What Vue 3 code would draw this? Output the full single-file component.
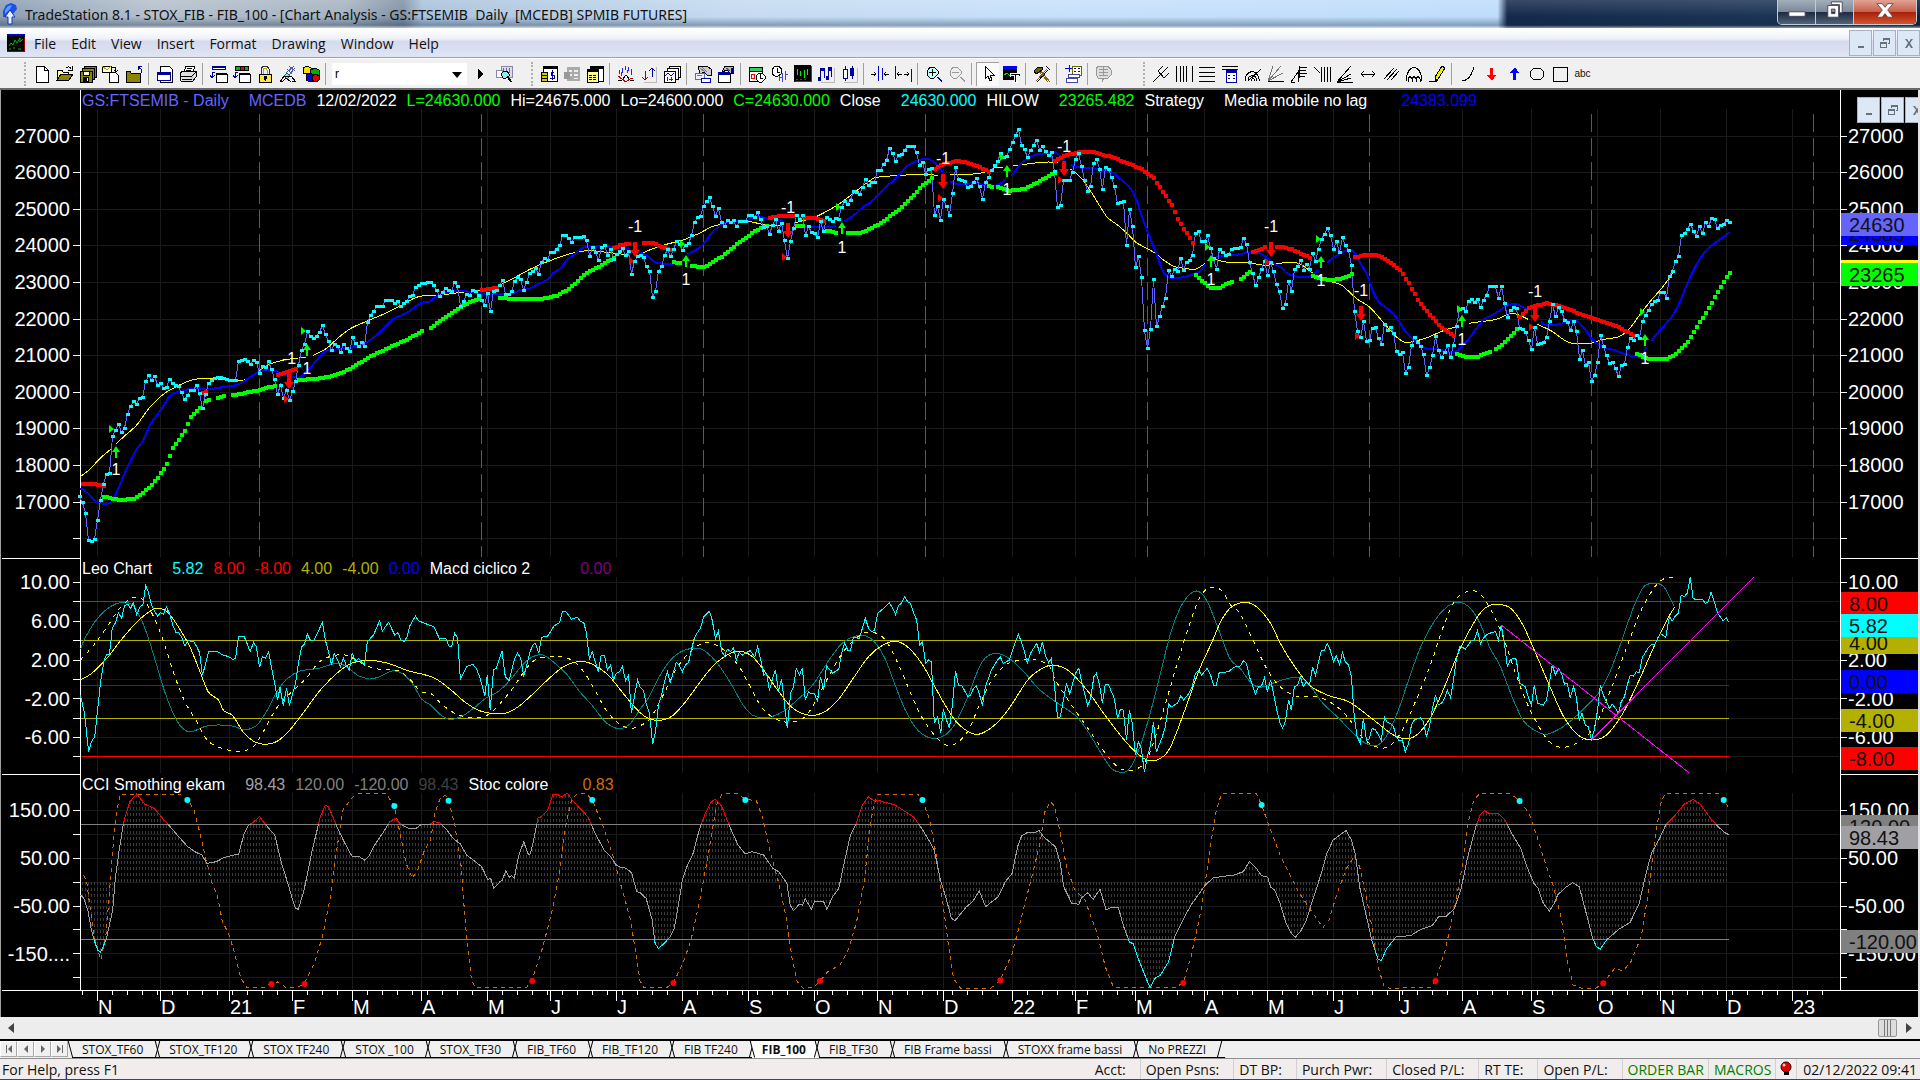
<template>
  <div class="window">
    <header class="title-bar">
      <svg class="app-logo" viewBox="0 0 18 24" aria-hidden="true">
        <path d="M2 15V9l3-6 5-2 5 2 1 4-4 5v3H9V9L6 13v2z" fill="#1c50e8" />
        <path d="M4 12V8l3-4 4-1-2 4z" fill="#5a9cff" />
        <path d="M9 8l5 7h-3v7H7v-7H4z" fill="#e8f2ff" stroke="#1238b4" />
      </svg>
      <h1 class="title">TradeStation 8.1 - STOX_FIB - FIB_100 - [Chart Analysis - GS:FTSEMIB&nbsp; Daily&nbsp; [MCEDB] SPMIB FUTURES]</h1>
      <div class="window-buttons">
        <button class="win-btn" type="button" aria-label="Minimize">
          <svg viewBox="0 0 20 20"><path d="M1 12h18v5H1z" fill="#fff" stroke="#445" /></svg>
        </button>
        <button class="win-btn" type="button" aria-label="Restore">
          <svg viewBox="0 0 20 20">
            <path d="M6 1h12v12h-3V4H6z" fill="#fff" stroke="#445" />
            <path d="M2 5h12v13H2zM6 9v5h4V9z" fill="#fff" fill-rule="evenodd" stroke="#445" />
          </svg>
        </button>
        <button class="win-btn close" type="button" aria-label="Close">
          <svg viewBox="0 0 20 20"><path d="M1 3h6l3 4 3-4h6l-6 7 6 8h-6l-3-4-3 4H1l6-8z" fill="#fff" stroke="#644" /></svg>
        </button>
      </div>
    </header>

    <nav class="menu-bar">
      <svg class="doc-icon" viewBox="0 0 18 18" aria-hidden="true">
        <path d="M0 0h18v18H0z" />
        <path d="M0 0h18v2H0z" fill="#0000d0" />
        <path d="M2 12l2-3 2 2 2-5 2 3 3-5v4l3-3M2 15h2M6 14h2M11 15h3" fill="none" stroke="#0b0" />
        <path d="M17.500 3v15M0 17.500h18" stroke="#900" />
      </svg>
      <button v-for="item in menu" :key="item" class="menu-item" type="button">{{ item }}</button>
      <div class="mdi-buttons">
        <button v-for="b in mdi" :key="b.name" type="button" :aria-label="b.name + ' chart'">
          <svg viewBox="0 0 12 12"><path :d="b.d" /></svg>
        </button>
      </div>
    </nav>

    <div class="toolbar">
      <template v-for="(tool, i) in tools" :key="i">
        <span v-if="tool === '|'" class="sep"></span>
        <span v-else-if="tool === ':'" class="grip"></span>
        <span v-else-if="tool === ' '" class="spacer"></span>
        <span v-else-if="tool === '.'" class="spacer small"></span>
        <div v-else-if="tool === 'symbol'" class="symbol-box">
          <input v-model="symbol" type="text" aria-label="Symbol" />
          <svg viewBox="0 0 10 6"><path d="M0 0h10L5 6z" /></svg>
        </div>
        <button v-else class="tool" :class="{ pressed: tool === 'pointer' }" type="button" :aria-label="tool">
          <span v-if="tool === 'abc'" class="abc">abc</span>
          <svg v-else viewBox="0 0 18 18">
            <path
              v-for="(s, j) in icons[tool]"
              :key="j"
              :d="s[0]"
              :fill="s[1] || 'none'"
              :stroke="s[2] || 'none'"
            />
          </svg>
        </button>
      </template>
    </div>

    <main class="chart">
      <div class="mdi-buttons floating">
        <button v-for="b in mdi" :key="b.name" type="button" :aria-label="b.name + ' window'">
          <svg viewBox="0 0 12 12"><path :d="b.d" /></svg>
        </button>
      </div>

      <section v-for="pane in panes" :key="pane.id" class="pane">
        <div class="legend">
          <span v-for="(l, i) in pane.legend" :key="i" :class="[l[1], l[2]]">{{ l[0] }}</span>
        </div>
        <svg class="plot" :viewBox="`0 ${pane.top} 1920 ${pane.height}`" role="img" :aria-label="pane.legend[0][0]">
          <!-- grid and axes -->
          <path class="grid" :d="pane.grid" />
          <path class="axis" :d="pane.axis" />
          <text v-for="t in pane.labels" :key="'l' + t.text" class="tick-label end" x="70" :y="t.y + 7">{{ t.left || t.text }}</text>
          <text v-for="t in pane.labels" :key="'r' + t.text" class="tick-label" x="1848" :y="t.y + 7">{{ t.text }}</text>
          <g v-for="(t, i) in pane.tags" :key="'t' + i">
            <rect x="1841" :y="t.y" width="77" :height="t.h" :fill="t.fill" />
            <text class="tag-label" x="1849" :y="t.y + t.base">{{ t.text }}</text>
          </g>

          <template v-if="pane.id === 'price'">
            <path class="cycle" :d="cycleLines" />
            <path class="line yellow" :d="curve(slowAvg)" />
            <path class="line blue thick" :d="curve(fastAvg)" />
            <path class="line violet" :d="straight(close)" />
            <path class="fill green" :d="squares(hilowUp, 4, 4)" />
            <path class="fill red" :d="squares(hilowDown, 4, 4)" />
            <path class="fill cyan" :d="squares(close, 4, 3)" />
            <g v-for="s in signals" :key="s.x">
              <path class="fill" :class="s.buy ? 'green' : 'red'" :d="arrow(s)" />
              <path class="fill" :class="s.buy ? 'green' : 'red'" :d="`M${s.fx - 2} ${s.fy - 4}v8l5-4z`" />
              <text class="signal-label" :x="s.x" :y="s.ty + 6">{{ s.buy ? '1' : '-1' }}</text>
            </g>
          </template>

          <template v-else-if="pane.id === 'leo'">
            <path class="line red" :d="level(155) + level(620)" />
            <path class="line olive" :d="level(271) + level(505)" />
            <path class="line navy" stroke-dasharray="6 2" :d="level(388)" />
            <path class="line purple" :d="level(406)" />
            <path class="line teal" :d="curve(cycleFast)" />
            <path class="line yellow" stroke-dasharray="4 5" :d="curve(cycleMid)" />
            <path class="line yellow" :d="curve(cycleSlow)" />
            <path class="line cyan" :d="straight(leo)" />
            <path class="line magenta" :d="straight(trend)" />
          </template>

          <template v-else>
            <defs>
              <clipPath id="over"><rect x="81" y="780" width="1760" height="44" /></clipPath>
              <clipPath id="under"><rect x="81" y="939" width="1760" height="60" /></clipPath>
            </defs>
            <path class="hatch" :d="hatch" />
            <path class="line gray" :d="level(823) + level(1168)" />
            <path class="line orange" stroke-dasharray="4 4" :d="straight(stoc)" />
            <path class="line silver" :d="straight(cci)" />
            <path class="line red" clip-path="url(#over)" :d="straight(cci)" />
            <path class="line cyan" clip-path="url(#under)" :d="straight(cci)" />
            <circle v-for="(p, i) in stocTops" :key="'c' + i" class="fill cyan" :cx="p[0]" :cy="p[1]" r="3" />
            <circle v-for="(p, i) in stocLows" :key="'d' + i" class="fill red" :cx="p[0]" :cy="p[1]" r="3" />
            <path class="axis" :d="timeTicks" />
            <text v-for="m in months" :key="m.x" class="tick-label" :x="m.x + 1" y="1014">{{ m.text }}</text>
          </template>
        </svg>
      </section>
    </main>

    <div class="scroll-bar">
      <button type="button" aria-label="Scroll left"><svg viewBox="0 0 6 10"><path d="M6 0v10L0 5z" /></svg></button>
      <span class="thumb"></span>
      <button type="button" aria-label="Scroll right"><svg viewBox="0 0 6 10"><path d="M0 0v10l6-5z" /></svg></button>
    </div>

    <div class="tabs">
      <button v-for="n in pager" :key="n.name" class="pager" type="button" :aria-label="n.name">
        <svg viewBox="0 0 8 10"><path :d="n.d" /></svg>
      </button>
      <div class="tab-list" role="tablist">
        <button
          v-for="t in tabs"
          :key="t"
          class="tab"
          :class="{ active: t === activeTab }"
          type="button"
          role="tab"
          :aria-selected="t === activeTab"
          @click="activeTab = t"
        >{{ t }}</button>
      </div>
    </div>

    <footer class="status-bar">
      <span class="help">For Help, press F1</span>
      <span v-for="s in status" :key="s" class="cell">{{ s }}</span>
      <span class="cell on">ORDER BAR</span>
      <span class="cell on">MACROS</span>
      <span class="cell bulb">
        <svg viewBox="0 0 12 14"><circle cx="6" cy="6" r="5" fill="#e00000" stroke="#300" /><path d="M4 11h5v3H4z" /><circle cx="4" cy="4" r="1.500" fill="#fcc" /></svg>
      </span>
      <span class="cell date">02/12/2022 09:41</span>
    </footer>
  </div>
</template>

<script setup>
import { ref } from 'vue'

const symbol = ref('r')
const activeTab = ref('FIB_100')

const menu = ['File', 'Edit', 'View', 'Insert', 'Format', 'Drawing', 'Window', 'Help']
const tabs = [
  'STOX_TF60', 'STOX_TF120', 'STOX TF240', 'STOX _100', 'STOX_TF30', 'FIB_TF60', 'FIB_TF120',
  'FIB TF240', 'FIB_100', 'FIB_TF30', 'FIB Frame bassi', 'STOXX frame bassi', 'No PREZZI'
]
const status = ['Acct:', 'Open Psns:', 'DT BP:', 'Purch Pwr:', 'Closed P/L:', 'RT TE:', 'Open P/L:']
const pager = [
  { name: 'First', d: 'M1 1h1v8H1zM7 1v8L3 5z' },
  { name: 'Previous', d: 'M6 1v8L2 5z' },
  { name: 'Next', d: 'M2 1v8l4-4z' },
  { name: 'Last', d: 'M1 1v8l4-4zM6 1h1v8H6z' }
]
const mdi = [
  { name: 'Minimize', d: 'M3 9h6v2H3z' },
  { name: 'Restore', d: 'M4 1h7v6H9V6h1V3H5v1H4zM1 5h7v6H1zM2 7v3h5V7z' },
  { name: 'Close', d: 'M2 2h2l2 3 2-3h2L7 6l3 5H8L6 8l-2 3H2l3-5z' }
]

// toolbar: '|' separator, ':' grip, ' ' and '.' free space
const tools = [
  ':', 'new', 'open', 'save', 'import', 'folder', '|', 'page', 'print', '|', 'stack', 'stack2', 'lock', 'satellite',
  'cubes', '|', 'symbol', 'go', 'lookup', '.', ':', 'money', 'table-off', 'table', '|', 'wave', 'updown', 'charts', '|',
  'edit', 'format', '|', 'calendar', 'clock', 'bars', 'notes', 'candles', '|', 'squeeze', 'expand', '|', 'zoom-in',
  'zoom-out', '|', 'pointer', 'text-chart', '|', 'hammer', '|', 'macro', '|', 'bubble', ' ', ':', 'pitchfork', 'vlines',
  'hlines', 'calc', 'arc', 'fan', 'retrace', 'timezone', 'speed', 'hextend', 'parallel', 'cycle', 'pencil', '|',
  'curve', 'down', 'up', 'ellipse', 'rect', 'abc'
]

const K = '#000'
const B = '#0000a0'
const icons = {
  new: [['M3 1h8l4 4v12H3z', '#fff', K], ['M11 1v4h4', '', K]],
  open: [['M1 15V5h5l1 2h5v3', '#ff9', K], ['M1 15l4-6h12l-4 6z', '#8a8400', K], ['M10 3c2-2 4-1 5 1m1-3v4h-4', '', K]],
  save: [['M5 1h12v11H5z', '#8a8400', K], ['M3 3h12v11H3z', '#8a8400', K], ['M1 6h12v11H1z', '#8a8400', K], ['M4 6h6v4H4z', '#fff', K], ['M4 12h6v5H4z', K], ['M8 13h1v3H8z', '#fff']],
  import: [['M0 1h9v6H0z', '#ffd', K], ['M0 1l5 4 4-4', '', '#aa0'], ['M7 7h6l3 3v7H7z', '#fff', K], ['M10 2c4 0 4 1 4 5m-2-2l2 2 2-2', '', K]],
  folder: [['M1 6h4l1 2h9v9H1z', '#8a8400', K], ['M16 8V4l-3-2m0 3V1h4', '', B]],
  page: [['M4 1h9l3 3v13H4z', '#fff', K], ['M1 7h13v8H1z', '#fff', B], ['M1 7h13v3H1z', B]],
  print: [['M5 7l2-6h9l-2 6z', '#fff', K], ['M1 8l3-2h13v6l-3 4H2l-1-3z', '#ddd', K], ['M1 11h12l4-4M3 14h10M8 3h5M7 5h5', '', K], ['M12 12h2v1h-2z', '#cc0']],
  stack: [['M2 1h14v4H2z', B], ['M3 3h12', '', '#fff'], ['M6 9h11v8H6z', '#fff', K], ['M6 8h11v2H6z', K], ['M5 7H2v5m-2-2l2 3 3-3', '', B]],
  stack2: [['M2 1h14v5H2z', K], ['M3 2h4v3H3z', '#0b0'], ['M8 2h3v3H8z', '#e00'], ['M12 2h3v3h-3z', '#0b0'], ['M6 9h11v8H6z', '#fff', K], ['M6 8h11v2H6z', K], ['M5 7H2v5m-2-2l2 3 3-3', '', B]],
  lock: [['M5 9V4l2-3h4l2 3v5', '', '#333'], ['M7 9V5l1-2h2l1 2v4', '', '#aa0'], ['M3 9h12v8H3z', '#ffe640', K], ['M8 11h3v2l-1 3H9l-1-3z', K]],
  satellite: [['M7 8l8-7m-5 9l6-7M10 1l6 5M8 4l5 5', '', '#55a'], ['M5 11l3-3 3 3-3 3z', '#6ff', '#066'], ['M1 17l4-6h7l5 6M3 17l4-4 5 4M1 16h3m9 0h3', '', K]],
  cubes: [['M1 3l4-2 4 2v5H1z', '#ffe000', K], ['M8 5l5-2 4 2v5H8z', '#00b000', K], ['M4 10l4-2 4 2v6l-4 1-4-2z', '#0000d0', K], ['M10 11l4-2 3 2v4l-3 2-4-2z', '#e00000', K]],
  go: [['M6 4v10l5-5z', K]],
  lookup: [['M6 1h11v11H6z', '#ddd', '#88a'], ['M8 3v4m3-4v3m3-3v5', '', '#66a'], ['M1 5h6v7H1z', '#fff', '#88a'], ['M6 9l3-3h3l2 3v2l-3 2H8z', '#8ef', K], ['M12 12l4 5', '', K], ['M13 12l4 5', '', K]],
  money: [['M3 1h14v15H3z', '#fff', K], ['M3 1h14v3H3z', K], ['M1 7h6v9H1z', '#cc0', K], ['M1 10h6M1 13h6', '', K], ['M14 7h-3v3h3v3h-4m2-8v10', '', B]],
  'table-off': [['M4 2h13v14H4z', '#aaa'], ['M6 5h3v2H6zm5 0h4v2h-4zM6 9h3v2H6zm5 0h4v2h-4zm0 4h4v1h-4z', '#eee'], ['M1 7h6v7H1z', '#999']],
  table: [['M4 1h13v15H4z', '#fff', K], ['M4 1h13v3H4z', K], ['M1 4h11v13H1z', '#ff8', K], ['M1 4h11v3H1z', K], ['M3 10h3m1 0h3M3 12h3m1 0h3M3 14h3m1 0h3', '', K]],
  wave: [['M2 5v4M5 3v5M8 1v4M11 2v4M14 4v6', '', '#22f'], ['M4 7v4M10 5v3', '', '#e00'], ['M1 16l4-1 4-5 4 5 4 1', '', K], ['M1 11l4 3 4 3 4-3 3-1', '', '#b00']],
  updown: [['M5 6v9m-3-3l3 3 3-3', '', '#900'], ['M12 12V3m-3 3l3-3 3 3', '', B], ['M16 2v15H4', '', '#bbb']],
  charts: [['M6 1h11v11H6z', '#fff', K], ['M4 3h11v11H4z', '#fff', K], ['M1 6h11v11H1z', '#fff', K], ['M2 11l3-3 3 3 3-3', '', '#00f'], ['M4 12v4m4-4v4m-2-2h4', '', '#a00']],
  edit: [['M4 1h9l4 3v6h-4l-3-3-4 2z', '#ccc', K], ['M6 3l5 4M8 2l5 5', '', '#777'], ['M1 8h9v6H1z', '#eef', '#66a'], ['M7 13h9v4H7z', '#fff', B], ['M3 10h5', '', '#880']],
  format: [['M8 1h8v7h-3l-3-3-5 2z', '#bbb', K], ['M9 3l4 3', '', '#555'], ['M1 8h12v9H1z', '#fff', K], ['M1 7h12v3H1z', B], ['M14 3h3v5h-3z', B]],
  calendar: [['M1 2h13v14H1z', '#fff', K], ['M1 2h13v4H1z', '#3c6', K], ['M3 9h3v4H3z', '', '#e00'], ['M8 11l3-3h3l3 3v3l-3 3h-3l-3-3z', '#fff', K], ['M12 9v4h3', '', K]],
  clock: [['M1 5l3-4h4l3 4-1 4-3 2H4L1 9z', '#fff', K], ['M6 3v4h3', '', K], ['M8 11v5m3-8v9m3-11v9m-6-3h3m3-3h3', '', '#44c']],
  bars: [['M0 0h17v17H0z', K], ['M3 4v6M6 6v5M10 5v8M13 4v6', '', '#0e0'], ['M1 16h16V1', '', '#e00'], ['M2 14h2m2 0h2m2 0h2', '', '#e00']],
  notes: [['M3 13V3h4v10M11 12V2h3v10', '', B], ['M1 12h3v4H1zM4 3h3v3H4zM9 11h3v4H9zM12 2h3v4h-3z', B], ['M17 3v14H4', '', '#bbb']],
  candles: [['M5 1v15M12 1v13', '', B], ['M3 4h4v9H3z', '#fff', B], ['M10 3h4v8h-4z', B], ['M17 3v14H4', '', '#bbb']],
  squeeze: [['M7 1v15M11 3v12', '', '#00c'], ['M0 9h5m-2-2l2 2-2 2M18 9h-5m2-2l-2 2 2 2', '', K]],
  expand: [['M1 1v13M17 4v13', '', '#00c'], ['M3 9h5M5 7L3 9l2 2m10-2h-5m3-2l2 2-2 2', '', K]],
  'zoom-in': [['M2 7l3-5h4l4 4v3l-4 4H5L2 10z', '#bff', K], ['M7 4v7M4 7h7', '', K], ['M12 12l5 5m-4-5l4 4', '', B]],
  'zoom-out': [['M2 7l3-5h4l4 4v3l-4 4H5L2 10z', '#eee', '#999'], ['M4 7h7', '', '#999'], ['M12 12l5 5m-4-5l4 4', '', '#999']],
  pointer: [['M6 1v13l3-3 2 5 2-1-2-5h4z', '#fff', K]],
  'text-chart': [['M1 1h14v14H1z', K], ['M1 1h14v3H1z', '#00f'], ['M2 10l3-2 3 3 3-3', '', '#0d0'], ['M8 8h10v3h-1l-1-1h-2v6h1v1h-4v-1h1v-6h-2l-1 1H8z', K, '#fff']],
  hammer: [['M3 16L14 4', '', '#860'], ['M4 17L15 5', '', K], ['M5 3l12 14m-13-13l11 13', '', '#860'], ['M1 6l4-4h4v3L6 7l-3 2z', '#660', K], ['M13 1l4 4', '', K]],
  macro: [['M5 0v7M1 3h8', '', '#00f'], ['M8 1h9v9H8z', '#ffd', '#660'], ['M10 3h2m2 0h2m-6 3h2m2 0h2', '', B], ['M4 9h11v3H4zM2 13h11v4H2z', '#fff', '#44a']],
  bubble: [['M3 1h10l3 4v5l-3 3H9l-2 4v-4H3L1 9V4z', '#ddd', '#999'], ['M4 4h9M4 7h9m-9 3h9M8 2v9', '', '#999']],
  pitchfork: [['M1 17L13 5M6 6l6 7M6 6l5-5M12 13l5-5M9 9l7-7', '', K]],
  vlines: [['M1 1v16M5 1v16M8 1v16M11 1v16M17 1v16', '', K]],
  hlines: [['M1 2h16M1 7h16M1 11h16M1 16h16', '', K]],
  calc: [['M1 1h16M1 4h16', '', K], ['M5 5h10v12H5z', '#fff', B], ['M5 5h10v3H5z', B], ['M7 10h2m3 0h2m-7 3h2m3 0h2', '', B]],
  arc: [['M1 16c0-11 12-13 14-2v2M4 16c0-7 8-7 9 0M7 16c0-3 4-3 4 0M4 16L17 4', '', K]],
  fan: [['M1 16h16', '', K], ['M1 16L6 1M1 16L14 1M1 16l15-8', '', '#777']],
  retrace: [['M1 17l7-10v10M1 17h4M9 2h8M9 5h7M9 8h8M9 11h6M9 1v12', '', K]],
  timezone: [['M1 2l6 6M8 2v15M11 2v15M14 2v15M17 2v15', '', K]],
  speed: [['M1 17h16M1 17L15 1M1 17l14-8M1 17l14-4', '', K]],
  hextend: [['M2 9h14M5 6L2 9l3 3M13 6l3 3-3 3', '', K]],
  parallel: [['M2 14L12 3M5 15L15 4M9 15l8-9', '', K]],
  cycle: [['M1 16c1-18 15-18 16 0', '', K], ['M3 17v-3l2-3 2 3v3m0-3l2-3 2 3v3m0-3l2-3 2 3v3', '', K]],
  pencil: [['M7 12l7-11 3 2-7 11-3 2z', '#ee0', K], ['M1 16h8l1-2', '', K]],
  curve: [['M3 16c7-1 9-5 12-14', '', K]],
  down: [['M8 3h3v7h3l-4 6-5-6h3z', '#f00']],
  up: [['M8 15h3V8h3l-4-6-5 6h3z', '#00f']],
  ellipse: [['M2 9c0-8 14-8 14 0s-14 8-14 0z', '', K]],
  rect: [['M2 2h14v14H2z', '', K]]
}

// Digitised points come in three sheets, 1568 units wide, 2.45 units to a pixel across and 3 down
const SHEET = 1568
const px = (x, sheet = 0) => (x + SHEET * sheet) / 2.45
const priceY = (y) => 90 + y / 3
const lowerY = (y) => 550 + y / 3

const trace = (sheets, toY, snap = false) => {
  const runs = [[]]
  sheets.forEach((sheet, i) => {
    sheet.trim().split(/\s+/).forEach((token) => {
      if (token === '|') {
        runs.push([])
        return
      }
      const [a, b] = token.split(',').map(Number)
      let x = px(a, i)
      if (snap) x = 82.5 + Math.round((x - 82.5) / 3) * 3
      runs[runs.length - 1].push([x, toY(b)])
    })
  })
  return runs.filter((r) => r.length)
}

const f = (n) => n.toFixed(1)
const straight = (runs) => runs.map((r) => 'M' + r.map((p) => f(p[0]) + ' ' + f(p[1])).join('L')).join('')

const curve = (runs) => runs.map((r) => {
  let d = `M${f(r[0][0])} ${f(r[0][1])}`
  for (let i = 0; i < r.length - 1; i++) {
    const p0 = r[i - 1] || r[i]
    const [p1, p2] = [r[i], r[i + 1]]
    const p3 = r[i + 2] || p2
    d += `C${f(p1[0] + (p2[0] - p0[0]) / 6)} ${f(p1[1] + (p2[1] - p0[1]) / 6)} `
    d += `${f(p2[0] - (p3[0] - p1[0]) / 6)} ${f(p2[1] - (p3[1] - p1[1]) / 6)} ${f(p2[0])} ${f(p2[1])}`
  }
  return d
}).join('')

// one value per bar, a bar every 3px
const perBar = (run) => {
  const out = []
  let i = 0
  const first = 82.5 + Math.ceil((run[0][0] - 82.5) / 3) * 3
  for (let x = first; x <= run[run.length - 1][0] + 0.01; x += 3) {
    while (i < run.length - 2 && run[i + 1][0] < x) i++
    const a = run[i]
    const b = run[i + 1] || a
    const t = b[0] === a[0] ? 0 : (x - a[0]) / (b[0] - a[0])
    out.push([x, a[1] + (b[1] - a[1]) * t])
  }
  return out
}

const squares = (runs, w, h) => runs.flatMap(perBar)
  .map(([x, y]) => `M${Math.round(x - w / 2)} ${Math.round(y - h / 2)}h${w}v${h}h${-w}z`).join('')

const level = (y) => `M81 ${Math.floor(lowerY(y)) + 0.5}H1729`

const close = trace([
  `197,1220 202,1238 209,1269 215,1352 223,1353 231,1347 239,1290 246,1230 253,1182 260,1152 268,1150 275,1040 282,1020
  290,1004 298,1026 305,1014 312,972 319,950 327,933 334,942 341,925 348,923 356,875 363,857 370,870 378,858 386,885
  393,880 400,895 408,892 415,868 422,880 430,885 438,890 444,908 452,927 459,917 466,900 474,900 481,886 489,910
  496,954 503,913 510,880 520,872 532,861 545,866 560,870 577,872 584,813 598,807 613,822 620,810 628,817 635,850
  643,830 650,833 657,815 665,838 672,868 680,912 687,885 694,925 702,900 709,930 716,905 726,875 731,825 738,782
  745,762 753,725 761,738 768,745 775,740 782,726 790,705 797,733 805,755 812,780 819,762 827,770 834,786 841,763
  848,775 856,785 863,743 871,760 878,770 885,758 893,768 900,698 908,677 922,650 937,648 944,632 960,630 967,640
  975,633 982,648 997,635 1004,620 1011,615 1018,593 1033,580 1055,578 1062,585 1077,618 1092,596 1105,605 1113,578
  1121,588 1128,650 1135,635 1143,613 1150,615 1157,602 1165,604 1175,615 1187,645 1194,610 1201,665 1209,603 1217,602
  1231,570 1239,612 1246,614 1253,605 1261,575 1268,562 1276,568 1283,600 1290,578 1298,550 1312,536 1320,552 1327,518
  1334,506 1342,510 1349,488 1357,487 1364,477 1371,467 1378,437 1386,435 1400,456 1408,443 1430,440 1437,450 1444,498
  1451,473 1458,486 1466,510 1473,473 1481,467 1488,495 1496,478 1503,508 1510,492 1518,485 1525,475 1533,495 1540,485
  1547,552 1555,513 1562,500`,
  `0,495 8,503 15,530 23,543 31,621 38,605 45,543 52,530 60,497 67,478 74,500 82,478 89,455 96,463 104,480 111,465
  119,460 126,437 133,396 141,383 148,378 156,348 170,323 177,350 185,378 192,355 200,397 207,408 214,392 222,397
  229,392 236,410 243,393 260,393 266,377 273,375 281,383 288,368 295,388 303,412 310,408 317,432 325,405 332,388
  339,423 347,400 361,505 369,455 383,375 391,388 398,375 405,435 413,410 420,427 427,430 435,443 442,395 450,425
  457,383 465,387 472,395 479,385 487,387 494,352 501,335 509,343 516,330 523,305 537,312 545,293 552,267 560,285
  568,277 574,277 582,240 589,240 597,222 604,212 611,175 619,190 626,213 634,197 641,193 648,182 656,170 670,170
  678,188 685,225 692,217 700,252 707,237 714,235 721,375 729,350 737,390 743,327 751,350 758,375 765,310 773,233
  780,268 795,275 803,293 810,290 817,277 824,265 831,290 839,327 846,277 854,262 861,240 876,215 883,190 890,203
  898,200 912,158 920,137 927,118 934,165 942,178 949,203 957,182 964,165 972,150 979,180 986,168 993,185 1001,197
  1008,187 1015,245 1023,353 1030,345 1038,272 1052,270 1060,247 1067,208 1075,190 1082,228 1089,270 1097,303 1104,290
  1112,220 1118,208 1126,237 1133,297 1140,232 1147,237 1155,263 1162,290 1170,340 1184,335 1192,465 1199,357 1206,410
  1214,533 1221,500 1228,562 1236,722 1243,775 1250,717 1258,568 1265,710 1272,680 1280,648 1287,625 1295,540 1302,560
  1309,538 1317,545 1325,505 1332,540 1339,518 1346,510 1353,495 1361,430 1369,425 1376,455 1383,455 1390,437 1398,475
  1412,537 1419,478 1427,487 1435,495 1442,493 1449,478 1471,472 1478,445 1486,462 1493,518 1500,550 1508,587 1515,563
  1523,538 1530,513 1537,555 1545,518 1552,545 1560,582 1567,605`,
  `6,655 13,642 20,575 28,603 35,537 43,530 50,510 57,540 65,523 72,537 80,490 87,513 94,477 101,447 109,433 116,415
  123,437 131,477 138,455 146,487 153,443 160,467 167,480 175,525 182,663 189,725 197,743 204,695 212,753 218,752
  226,715 234,713 241,745 248,762 256,702 263,720 270,713 278,730 285,785 292,792 300,788 307,850 315,832 322,765
  329,743 337,757 344,768 351,792 359,857 366,833 373,797 381,740 388,782 396,803 403,787 410,767 418,803 425,765
  432,708 438,658 447,655 454,665 462,633 469,628 476,637 484,627 491,652 498,630 506,615 513,590 528,590 535,625
  542,590 550,640 557,683 564,660 572,653 579,655 587,715 594,718 601,727 608,750 616,778 623,713 631,762 645,758
  653,743 660,693 667,643 675,680 682,653 690,663 697,690 704,697 711,720 719,695 726,723 733,807 740,782 748,825
  755,817 763,873 770,857 778,818 785,735 792,768 800,797 807,820 814,817 822,835 829,860 836,825 844,822 851,773
  858,745 866,752 873,735 880,745 888,693 895,675 903,660 910,643 918,635 925,630 932,608 939,607 947,625 954,558
  961,543 969,515 976,500 983,437 990,430 998,418 1005,402 1012,423 1020,438 1027,410 1035,430 1042,398 1049,410
  1056,385 1064,387 1072,415 1079,405 1086,402 1093,392 1101,398`
], priceY, true)

const fastAvg = trace([
  `197,1197 205,1199 217,1212 230,1229 240,1238 270,1238 290,1195 312,1132 334,1080 350,1052 370,1000 395,958 415,920
  430,908 455,899 480,896 510,896 530,895 550,890 570,888 590,880 610,864 635,845 665,840 685,848 709,858 735,862
  755,840 775,812 797,783 820,779 845,775 870,771 895,760 920,738 940,715 965,686 995,670 1020,648 1035,638 1052,636
  1070,618 1100,607 1130,603 1160,607 1190,612 1225,612 1255,610 1275,600 1295,597 1315,585 1340,570 1355,550 1373,535
  1390,510 1410,490 1430,472 1455,467 1480,468 1510,473 1540,475`,
  `| 0,488 15,495 35,515 60,522 85,520 97,517 | 115,493 135,482 155,463 175,430 195,407 215,397 240,392 270,388 290,382
  320,385 350,392 | 380,405 410,412 440,411 460,412 480,408 | 500,395 525,375 545,352 570,332 600,293 625,268 655,228
  680,212 700,206 720,215 743,248 | 760,275 780,283 800,282 825,278 840,285 860,289 880,283 897,267 | 910,257 930,227
  950,205 975,192 1000,190 1017,187 1040,212 | 1055,225 1080,233 1105,235 1130,238 1160,250 1175,265 1200,292 1215,325
  1230,380 1245,430 1265,490 1280,540 1297,563 1330,562 1350,555 1370,545 1385,525 | 1412,500 1440,495 1470,493
  1490,485 1510,487 1530,497 1550,518 1567,530`,
  `5,535 20,552 45,560 70,560 95,540 | 115,518 135,500 160,482 178,482 195,515 215,560 230,610 245,640 265,657 285,682
  305,720 325,748 345,765 360,777 385,776 410,786 430,784 455,758 480,718 500,688 530,668 555,648 578,642 605,657 |
  640,695 650,705 685,703 710,690 728,693 750,722 770,755 800,775 820,780 845,793 870,798 890,792 897,772 | 910,752
  935,715 960,680 980,635 1000,575 1020,525 1045,480 1070,455 1090,438 1101,427`
], priceY)

const slowAvg = trace([
  `197,1160 220,1138 245,1105 272,1077 | 284,1063 305,1038 335,1005 365,955 400,913 440,885 470,870 500,865 525,866
  560,870 595,871 620,855 660,823 705,808 750,802 | 767,797 800,775 830,742 860,715 900,693 940,672 980,648 1025,620
  1075,616 1130,607 1180,600 1215,590 1250,570 1300,537 1345,513 1380,498 1410,487 1445,482 1480,486 1540,495`,
  `| 0,492 30,477 65,463 105,450 145,430 175,411 210,400 250,393 270,395 310,405 345,406 | 380,398 425,383 460,362
  490,340 530,303 560,275 580,262 640,256 690,253 720,255 730,257 | 760,254 810,253 850,245 870,233 890,232 | 915,228
  960,220 1000,216 1023,218 | 1055,237 1080,263 1105,305 1125,345 1145,382 1170,405 1195,432 1215,457 1245,477 1265,492
  1285,512 1310,530 1335,535 1360,538 1385,520 | 1410,508 1440,517 1490,518 1530,526 1567,520`,
  `6,519 40,518 60,530 95,565 | 120,573 150,585 165,600 190,628 220,652 255,700 285,740 305,757 325,755 360,743 400,722
  432,710 | 462,700 490,695 530,688 570,670 608,688 | 630,703 665,723 710,758 765,759 785,750 830,740 855,718 885,668
  910,630 935,595 965,545`
], priceY)

const hilowUp = trace([
  `253,1220 275,1226 300,1230 325,1226 345,1214 365,1195 385,1163 405,1122 425,1075 450,1022 470,980 490,953 | 506,933
  512,929 | 532,925 550,917 | 568,915 600,909 635,900 675,887 | 731,870 770,867 805,860 830,853 860,832 900,803 950,773
  1000,745 1033,722 | 1055,714 1090,680 1130,650 1160,633 1175,626 | 1224,624 1270,627 1330,627 1360,617 1390,597
  1415,573 1440,548 1470,525 1500,503`,
  `| 80,515 97,520 | 128,527 145,532 165,527 200,500 235,463 270,430 295,413 312,408 | 383,407 398,408 | 455,422
  480,428 | 509,428 540,428 570,415 600,392 630,360 670,315 695,285 714,265 | 857,289 863,290 | 876,292 905,302 940,297
  975,278 1012,248 | 1361,556 1380,580 1398,593 1420,593 1435,583 1449,575 | 1470,567 1493,546`,
  `| 80,557 100,567 130,570 155,565 175,553 | 432,793 455,800 485,800 515,785 | 528,778 550,757 583,718 | 873,792
  905,808 945,807 970,792 995,755 1020,710 1050,655 1075,605 1101,548`
], priceY, true)

const hilowDown = trace([
  `202,1181 225,1182 250,1187 | 496,910 504,906 | 680,856 726,837 | 1180,600 1217,594 | 1503,475 1518,466 1540,461`,
  `| 5,458 30,460 55,470 75,480 | 315,383 345,378 378,378 | 405,383 430,385 450,392 | 722,237 745,221 770,214 795,215
  825,228 855,245 | 1015,212 1045,195 1085,185 1120,188 1160,205 1200,222 1230,238 1255,265 1280,305 1300,345 1320,388
  1340,430 1355,458 | 1498,487 1530,472 | 1562,470`,
  `0,470 30,478 75,503 | 182,502 215,494 240,497 265,512 290,540 315,580 340,630 365,675 395,713 427,738 | 585,680
  608,655 | 618,650 655,640 685,647 730,668 780,690 830,712 867,737`
], priceY, true)

// sheet, side, arrow x / top, label y, entry flag x / y
const signals = [
  [0, 1, 283, 1068, 1137, 273, 1018], [0, 1, 753, 763, 835, 743, 724], [1, 1, 112, 495, 567, 103, 463],
  [1, 1, 494, 397, 470, 485, 352], [1, 1, 898, 225, 297, 887, 200], [1, 1, 1398, 495, 567, 1388, 472],
  [2, 1, 101, 498, 570, 92, 446], [2, 1, 447, 675, 748, 438, 656], [2, 1, 895, 732, 805, 887, 667],
  [0, 0, 709, 852, 804, 700, 928], [0, 0, 1555, 455, 407, 1546, 512], [1, 0, 362, 400, 352, 353, 502],
  [1, 0, 743, 252, 205, 735, 325], [1, 0, 1038, 213, 167, 1029, 271], [1, 0, 1545, 457, 408, 1536, 517],
  [2, 0, 198, 648, 601, 189, 739], [2, 0, 624, 650, 603, 614, 712]
].map(([s, buy, x, y, ty, fx, fy]) => ({
  buy,
  x: Math.round(px(x, s)),
  y: Math.round(priceY(y)),
  ty: Math.round(priceY(ty)),
  fx: Math.round(px(fx, s)),
  fy: Math.round(priceY(fy))
}))

const arrow = (s) => s.buy
  ? `M${s.x} ${s.y}l4 6h-3v6h-2v-6h-3z`
  : `M${s.x - 2} ${s.y}h4v8h3l-5 7-5-7h3z`

const cycleLines = [636, 1180, 1724, 2268, 2812, 3355, 3899, 4443]
  .map((x) => `M${Math.floor(px(x)) + 0.5} 114V557`).join('')

const leo = trace([
  `197,435 207,490 217,605 224,575 232,560 239,480 247,390 255,330 262,312 268,315 275,235 283,218 290,188 298,205
  305,168 313,162 320,175 327,158 335,195 343,170 350,165 357,107 363,125 370,160 378,183 386,198 393,188 400,193
  408,172 416,192 423,225 431,247 438,248 445,262 453,288 460,272 475,275 482,290 489,308 496,375 503,345 511,304
  533,305 545,314 560,320 570,328 577,326 584,260 598,259 605,280 613,305 621,277 628,290 636,352 643,320 650,325
  658,305 665,350 673,400 680,450 686,412 694,467 702,415 709,467 717,430 724,400 731,340 739,290 746,283 753,252
  761,272 768,272 775,257 790,217 797,270 805,305 812,345 819,310 827,330 834,350 841,325 848,345 856,360 863,310
  871,335 878,325 885,335 893,345 900,275 915,255 930,212 937,243 952,217 967,255 975,248 982,270 990,274 997,262
  1004,228 1018,198 1025,212 1040,220 1063,230 1077,267 1092,265 1100,288 1107,288 1114,250 1121,265 1128,388 1143,350
  1158,343 1167,355 1175,380 1188,437 1194,375 1201,480 1209,360 1216,355 1230,304 1238,380 1247,392 1261,325 1268,310
  1276,325 1283,380 1298,308 1305,285 1312,280 1320,310 1327,262 1342,258 1357,228 1371,218 1378,185 1386,184 1400,208
  1415,202 1422,215 1430,217 1437,250 1444,330 1451,305 1466,367 1473,315 1481,315 1488,360 1496,345 1503,390 1510,370
  1518,365 1525,350 1533,392 1540,375 1547,490 1555,435 1562,390`,
  `0,412 8,420 15,460 23,490 31,583 38,545 45,465 52,440 60,395 67,365 74,398 82,365 89,337 96,345 104,365 111,345
  119,337 126,300 133,265 141,247 148,235 156,200 170,184 177,210 185,265 192,243 200,303 207,318 214,297 222,305
  229,293 236,330 243,307 251,315 260,308 270,302 281,320 288,290 295,325 303,375 310,370 317,422 325,385 332,360
  339,422 347,388 361,535 369,430 376,410 383,355 391,375 398,353 405,450 413,425 420,432 427,430 435,455 442,380
  450,420 457,348 472,370 487,357 494,310 501,280 509,300 516,300 523,262 537,265 545,235 552,205 560,235 568,245
  575,240 582,190 597,175 611,158 619,175 626,193 634,165 641,160 648,140 656,155 663,160 670,188 678,210 685,285
  692,275 700,340 707,330 714,335 721,518 729,500 737,548 743,478 751,510 758,535 765,470 773,362 780,405 788,405
  803,440 810,435 817,415 824,408 831,430 839,467 846,410 854,385 861,360 876,330 883,322 890,340 905,330 920,275
  927,253 934,275 942,305 949,340 957,310 972,280 979,308 986,275 993,315 1001,338 1008,325 1015,400 1023,505 1030,500
  1045,400 1053,432 1067,370 1075,355 1082,395 1097,467 1104,445 1112,380 1118,370 1126,405 1133,460 1140,402 1148,405
  1162,445 1170,505 1177,478 1184,480 1192,570 1199,480 1206,520 1214,615 1221,575 1228,595 1236,667 1243,620 1250,590
  1258,515 1265,607 1280,560 1287,530 1295,462 1302,470 1317,460 1325,437 1332,450 1346,428 1353,410 1361,370 1369,362
  1376,375 1390,355 1398,375 1405,405 1412,405 1419,368 1442,365 1455,352 1471,348 1478,332 1486,340 1493,380 1508,432
  1515,410 1523,407 1530,382 1537,425 1545,390 1552,430 1560,480 1567,515`,
  `6,535 13,515 21,450 28,480 35,410 43,405 50,382 57,410 65,395 72,405 80,350 87,375 101,303 109,300 116,280 123,300
  131,335 138,317 146,345 153,307 160,335 168,345 175,380 182,500 189,560 197,580 204,505 212,570 218,568 226,535
  234,540 241,555 248,572 256,502 263,518 270,520 278,530 285,560 292,573 300,570 307,605 315,580 322,525 329,510
  344,503 351,515 359,560 366,530 373,480 381,435 388,465 396,460 403,445 410,420 418,443 425,390 432,330 440,290
  447,292 454,298 469,272 476,270 484,242 491,282 498,265 506,255 513,250 528,245 535,270 542,225 550,280 557,350
  564,330 572,325 579,328 587,400 601,410 608,440 616,465 623,405 631,460 645,465 653,450 660,400 667,345 675,375
  682,355 690,370 697,403 704,400 711,445 719,410 726,440 733,510 740,490 748,525 755,530 763,570 770,540 778,480
  785,405 792,435 807,475 814,463 822,475 829,490 836,455 844,440 851,405 858,375 866,378 873,365 880,368 888,322
  903,292 910,283 918,285 925,265 932,250 945,262 954,200 961,213 969,197 976,190 983,135 990,140 998,130 1005,82
  1012,145 1020,150 1035,148 1042,160 1049,155 1056,127 1064,155 1072,190 1086,212 1093,203 1100,217`
], lowerY)

const cycleFast = trace([
  `197,298 210,260 239,205 270,170 300,157 325,165 345,205 365,270 385,350 405,430 430,505 450,538 470,545 510,527
  565,527 600,539 630,525 655,480 680,422 705,385 735,363 780,355 825,340 850,350 875,375 905,387 930,380 960,363
  985,370 1010,400 1033,447 1055,465 1075,490 1100,508 1130,500 1160,475 1190,445 1220,425 1250,390 1280,345 1305,320
  1330,315 1355,335 1390,375 1420,425 1450,465 1480,512 1500,530 1520,536 1545,520`,
  `0,478 20,445 45,385 75,330 110,300 150,297 185,333 220,395 250,460 275,495 310,503 350,485 385,450 420,410 445,365
  470,318 500,275 540,256 570,270 600,325 625,405 650,480 680,540 715,565 745,557 770,525 800,450 825,370 845,325
  875,310 910,330 940,365 980,420 1030,465 1070,500 1100,550 1130,610 1155,655 1180,667 1200,655 1225,590 1250,490
  1275,370 1300,250 1325,170 1350,130 1370,125 1390,155 1415,230 1445,325 1470,355 1495,395 1520,412`,
  `0,392 45,382 75,410 105,460 140,500 180,550 210,580 240,585 265,550 290,480 315,390 345,290 380,210 410,170 437,157
  465,173 490,220 515,295 540,350 570,445 595,510 620,538 650,553 680,540 715,510 745,475 780,430 805,375 835,280
  865,175 890,112 915,100 940,110 965,168`
], lowerY)

const cycleSlow = trace([
  `197,389 225,370 265,320 300,265 340,210 375,178 390,175 410,185 435,227 465,290 490,365 510,425 535,450 548,482
  570,497 595,545 620,573 648,583 680,573 710,540 745,485 785,420 830,365 865,338 905,331 950,340 1000,362 1060,382
  1100,415 1140,457 1175,482 1210,491 1240,489 1270,470 1310,427 1350,380 1385,347 1425,334 1455,345 1490,375 1530,435`,
  `0,488 25,507 50,511 80,497 115,450 155,383 190,335 235,304 270,315 300,355 340,425 375,475 415,496 450,487 485,450
  525,380 560,320 595,285 625,274 655,290 690,340 720,405 750,470 780,522 820,553 850,542 880,512 910,465 950,390
  985,355 1015,346 1050,362 1095,420 1140,497 1180,560 1215,607 1245,631 1275,625 1300,590 1335,480 1370,360 1400,280
  1425,210 1450,170 1485,157 1515,175 1545,220`,
  `0,278 35,348 75,408 120,437 165,453 200,482 240,520 275,553 305,566 335,555 370,500 410,390 440,300 480,208 505,172
  535,163 565,175 595,225 630,320 665,420 695,500 730,555 765,570 800,555 840,490 880,390 920,280 950,205 967,172`
], lowerY)

const cycleMid = trace([
  `197,330 230,285 260,235 290,180 315,150 335,142 355,155 380,210 405,290 430,385 455,460 480,510 510,573 550,597
  587,604 620,590 645,545 680,470 720,420 750,385 785,333 830,314 860,322 900,348 930,358 975,362 1010,395 1030,425
  1055,430 1080,460 1110,487 1140,500 1180,502 1210,480 1250,425 1290,355 1315,328 1360,318 1400,330 1430,365 1455,415
  1485,480 1515,520 1545,535`,
  `0,527 25,505 55,440 90,355 130,297 165,278 200,295 240,345 270,410 300,475 335,508 365,516 405,500 440,430 475,350
  505,295 540,255 570,247 600,268 630,335 660,420 690,500 725,560 760,587 800,550 830,470 860,395 890,350 920,333
  960,328 1000,345 1020,395 1060,470 1100,540 1140,610 1170,650 1200,662 1235,640 1260,570 1290,450 1320,325 1350,210
  1375,135 1400,112 1425,122 1450,170 1470,190 1500,265 1535,355`,
  `0,410 40,438 90,440 130,462 165,500 200,560 235,590 265,590 295,550 330,460 370,340 400,230 430,150 460,124 485,127
  510,165 540,240 570,345 600,445 630,520 660,575 695,592 740,570 775,520 810,420 850,290 885,180 920,108 945,84
  967,84`
], lowerY)

const trend = [
  [[px(542, 2), lowerY(225)], [px(1002, 2), lowerY(668)]],
  [[px(765, 2), lowerY(568)], [px(1160, 2), lowerY(82)]]
]

const cci = trace([
  `197,1035 205,1045 215,1080 224,1140 232,1175 239,1200 246,1207 260,1170 268,1125 276,1080 283,980 292,900 303,815
  318,755 335,732 355,763 378,775 395,800 415,828 440,863 460,890 480,907 495,915 507,940 530,935 550,922 585,912
  597,855 607,828 620,817 636,800 655,830 673,855 690,940 705,1000 717,1050 724,1075 731,1078 745,1020 765,900 785,800
  797,765 805,770 827,835 845,880 863,920 880,920 893,930 903,920 915,890 940,845 955,815 967,806 985,825 1000,835
  1020,835 1033,822 1055,822 1065,815 1077,818 1095,840 1110,865 1128,882 1143,915 1165,935 1180,950 1195,988 1202,985
  1210,1015 1225,995 1231,990 1239,962 1247,982 1253,977 1260,985 1270,920 1283,875 1293,910 1298,915 1305,885 1318,803
  1327,800 1342,780 1355,732 1364,732 1376,740 1390,730 1405,755 1425,780 1440,800 1458,850 1480,900 1495,918 1510,945
  1520,952 1535,955 1548,970 1560,1025`,
  `0,1028 15,1045 30,1110 37,1180 45,1195 60,1180 75,1158 84,1135 92,1080 104,990 115,950 130,910 145,840 160,790
  175,755 185,748 200,768 220,830 240,885 258,912 275,905 303,915 325,955 340,965 360,1000 368,1065 376,1082 390,1063
  398,1065 405,1047 420,1078 428,1053 450,1055 458,1078 472,1040 487,1015 500,940 515,858 530,820 545,765 560,740
  573,752 590,753 625,765 650,785 670,800 690,835 705,865 721,900 735,985 750,1045 763,1105 772,1112 800,1070 815,1055
  831,1023 847,1070 860,1057 878,1040 895,995 912,970 925,890 935,858 950,847 965,848 978,842 990,862 1018,890 1030,940
  1038,1010 1058,1060 1075,1063 1082,1043 1097,1028 1110,1048 1127,1018 1142,1080 1155,1072 1172,1073 1185,1130
  1200,1178 1208,1180 1222,1230 1240,1285 1250,1313 1262,1285 1275,1275 1295,1235 1310,1160 1330,1110 1350,1065
  1385,1005 1405,983 1455,975 1478,965 1493,935 1510,955 1523,977 1538,982 1545,1012 1555,1020`,
  `0,1060 15,1120 28,1150 37,1162 50,1145 65,1110 80,1050 100,975 115,910 130,870 150,852 162,842 175,870 185,915
  195,1010 210,1090 225,1170 240,1228 248,1232 262,1195 285,1160 320,1157 345,1138 373,1127 390,1098 408,1098 428,1075
  443,1020 460,920 480,830 490,795 500,782 512,790 535,790 550,808 570,855 590,895 605,950 622,1000 632,1015 645,1060
  660,1083 672,1060 680,1035 700,1012 717,998 733,1010 745,1065 765,1160 775,1190 785,1197 800,1170 830,1138 858,1117
  880,1060 895,980 910,910 930,865 945,825 965,800 990,763 1012,748 1030,763 1055,805 1075,832 1090,848 1100,854`
], lowerY)

const stoc = trace([
  `205,975 213,1000 222,1085 232,1165 247,1230 260,1150 272,970 280,840 288,770 295,732 440,732 460,750 475,780 490,850
  505,930 520,1000 533,1040 545,1115 560,1150 575,1210 590,1285 605,1312 645,1314 665,1300 680,1296 700,1312 725,1313
  745,1302 770,1240 790,1160 810,1040 825,900 840,780 865,740 880,730 945,730 966,767 980,850 995,940 1010,985 1025,955
  1040,900 1055,870 1065,790 1080,740 1092,737 1100,755 1115,830 1130,950 1140,1120 1155,1290 1165,1313 1290,1313
  1304,1290 1330,1190 1355,1070 1370,970 1385,830 1400,750 1415,730 1437,731 1451,750 1475,820 1500,910 1520,1000
  1545,1110`,
  `0,1292 10,1313 65,1313 82,1298 105,1240 125,1170 145,1060 165,930 180,820 188,765 200,735 220,730 240,732 258,748
  285,752 300,800 320,910 340,1000 358,1100 372,1220 385,1295 400,1315 425,1313 441,1293 460,1265 490,1245 510,1200
  530,1120 550,990 560,870 570,780 582,732 680,732 692,750 710,810 725,910 740,1040 755,1180 768,1285 785,1314 860,1314
  883,1290 912,1210 935,1100 960,980 980,880 992,785 1005,755 1015,768 1030,850 1045,950 1065,1020 1090,1050 1120,1150
  1140,1250 1160,1312 1310,1314 1331,1298 1350,1220 1375,1080 1395,910 1410,790 1425,730 1510,730 1523,765 1545,840`,
  `0,915 20,965 45,1025 75,1080 105,1133 120,1110 140,1030 165,950 182,920 195,950 210,1030 225,1130 240,1250 255,1310
  270,1315 370,1312 381,1293 405,1200 430,1060 445,960 460,820 475,750 490,730 565,731 587,752 610,790 630,860 650,940
  670,1010 690,1110 705,1240 718,1305 740,1315 775,1314 792,1298 820,1255 840,1263 860,1235 885,1160 905,1010 920,850
  935,750 945,730 1075,731 1087,750 1100,775`
], lowerY)

const stocTops = trace(['459,750 966,768 1099,752 1451,750', '258,750 692,750 1523,765', '587,753 1087,750'], lowerY).flat()
const stocLows = trace(['665,1302 746,1302 1304,1293', '82,1299 441,1293 883,1291 1331,1299', '381,1293 792,1300'], lowerY).flat()

const hatch = perBar(cci[0]).map(([x, y]) => `M${x} 882V${Math.round(y)}`).join('')

const months = [
  [239, 'N'], [393, 'D'], [562, '21'], [716, 'F'], [863, 'M'], [1033, 'A'], [1194, 'M'], [1348, 'J'], [1510, 'J'],
  [1672, 'A'], [1834, 'S'], [1996, 'O'], [2150, 'N'], [2311, 'D'], [2480, '22'], [2635, 'F'], [2782, 'M'], [2951, 'A'],
  [3105, 'M'], [3267, 'J'], [3429, 'J'], [3583, 'A'], [3752, 'S'], [3914, 'O'], [4068, 'N'], [4230, 'D'], [4391, '23']
].map(([x, text]) => ({ x: Math.floor(px(x)), text }))

let timeTicks = 'M2 990.5H1918'
for (let x = 82.5; x < 1823; x += 15) timeTicks += `M${x} 990v5`
months.forEach((m) => { timeTicks += `M${m.x + 0.5} 990v11` })

const gridPath = (top, bottom, rows, toY) =>
  months.map((m) => `M${m.x + 0.5} ${top}V${bottom}`).join('') +
  rows.map((y) => `M82 ${Math.floor(toY(y)) + 0.5}H1839`).join('')

const axisPath = (top, bottom, rows, toY, rule) =>
  `M80.5 ${top}V${bottom}M1840.5 ${top}V${bottom}` +
  rows.map((y) => `M73 ${Math.floor(toY(y)) + 0.5}h7M1841 ${Math.floor(toY(y)) + 0.5}h6`).join('') +
  (rule ? `M2 ${rule}.5H80M1840 ${rule}.5H1918` : '')

const priceRows = [139, 247, 358, 466, 577, 688, 796, 907, 1015, 1126, 1237, 1345]
const leoRows = [97, 155, 214, 271, 331, 388, 446, 505, 562, 620]
const cciRows = [781, 853, 925, 997, 1069, 1138, 1210, 1282]

const tag = (text, fill, y, h = 23, base = 19) => ({ text, fill, y, h, base })

const panes = [
  {
    id: 'price',
    top: 109,
    height: 449,
    grid: gridPath(109, 557, priceRows, priceY),
    axis: axisPath(90, 558, priceRows, priceY, 558),
    labels: priceRows.slice(0, 11).map((y, i) => ({ text: String(27000 - i * 1000), y: Math.round(priceY(y)) })),
    tags: [
      tag('24383', '#0000ff', 222, 23, 19),
      tag('24630', '#6464ff', 213),
      tag('', '#ffff00', 260),
      tag('23265', '#00ff00', 263)
    ],
    legend: [
      ['GS:FTSEMIB - Daily', 'violet', 'wide'], ['MCEDB', 'violet', ''], ['12/02/2022', 'white', ''],
      ['L=24630.000', 'green', ''], ['Hi=24675.000', 'white', ''], ['Lo=24600.000', 'white', ''],
      ['C=24630.000', 'green', ''], ['Close', 'white', 'wide'], ['24630.000', 'cyan', ''], ['HILOW', 'white', 'wide'],
      ['23265.482', 'green', ''], ['Strategy', 'white', 'wide'], ['Media mobile no lag', 'white', 'wider'],
      ['24383.099', 'blue', '']
    ]
  },
  {
    id: 'leo',
    top: 577,
    height: 197,
    grid: gridPath(577, 773, leoRows, lowerY),
    axis: axisPath(558, 774, leoRows, lowerY, 774),
    labels: [97, 214, 331, 446, 562].map((y, i) => ({ text: (10 - i * 4).toFixed(2), y: Math.round(lowerY(y)) })),
    tags: [
      tag('4.00', '#b4b000', 631, 23, 19),
      tag('8.00', '#ff0000', 592, 22),
      tag('5.82', '#00ffff', 614),
      tag('0.00', '#0000ff', 670),
      tag('-4.00', '#b4b000', 709),
      tag('-8.00', '#ff0000', 747)
    ],
    legend: [
      ['Leo Chart', 'white', 'wide'], ['5.82', 'cyan', ''], ['8.00', 'red', ''], ['-8.00', 'red', ''],
      ['4.00', 'olive', ''], ['-4.00', 'olive', ''], ['0.00', 'blue', ''], ['Macd ciclico 2', 'white', 'widest'],
      ['0.00', 'purple', '']
    ]
  },
  {
    id: 'cci',
    top: 793,
    height: 224,
    grid: gridPath(793, 989, cciRows, lowerY),
    axis: axisPath(774, 990, cciRows, lowerY),
    labels: [
      { text: '150.00', y: 810 }, { text: '50.00', y: 858 }, { text: '-50.00', y: 906 },
      { text: '-150.00', left: '-150....', y: 954 }
    ],
    tags: [tag('120.00', '#808080', 815), tag('98.43', '#a0a0a4', 826), tag('-120.00', '#808080', 930)],
    legend: [
      ['CCI Smothing ekam', 'white', 'wide'], ['98.43', 'silver', ''], ['120.00', 'gray', ''], ['-120.00', 'gray', ''],
      ['98.43', 'dim', ''], ['Stoc colore', 'white', 'wider'], ['0.83', 'orange', '']
    ]
  }
]
</script>

<style>
body {
  margin: 0;
  background: #f0f0f0;
}
</style>

<style scoped>
.window {
  font-family: 'Open Sans', 'Noto Sans', sans-serif;
  font-size: 14px;
  color: #111;
  background: #f0f0f0;
  overflow: hidden;
}

button {
  font: inherit;
  color: inherit;
  padding: 0;
  border: 0;
  background: none;
}

.title-bar {
  display: flex;
  align-items: flex-start;
  height: 28px;
  background:
    linear-gradient(180deg, rgba(255, 255, 255, 0.15), rgba(255, 255, 255, 0) 60%, rgba(20, 40, 70, 0.35) 90%, rgba(220, 230, 240, 0.6)),
    linear-gradient(90deg, #8a9db1, #b4c0cc 8%, #a5b3c1 18%, #7f90a4 21%, #a9c2db 22%, #c4daf0 38%, #c6e0fa 55%, #bedcfa 78%, #14294a 78.500%, #1b3453 92%, #0c2038);
}

.app-logo {
  width: 18px;
  height: 24px;
  margin: 2px 6px 0 1px;
}

.title {
  flex: 1;
  margin: 0;
  font-family: 'Noto Sans', 'Open Sans', sans-serif;
  font-size: 14px;
  font-weight: 400;
  line-height: 30px;
  white-space: nowrap;
  overflow: hidden;
}

.window-buttons {
  display: flex;
  height: 24px;
  margin-right: 3px;
  border: 1px solid #c3ccd6;
  border-top: 0;
  border-radius: 0 0 5px 5px;
  overflow: hidden;
}

.win-btn {
  width: 38px;
  background: linear-gradient(#a3aebb, #7b8999 48%, #1d2c40 52%, #51647a);
  border-right: 1px solid #c3ccd6;
}

.win-btn svg {
  width: 18px;
  height: 18px;
}

.win-btn.close {
  width: 62px;
  border: 0;
  background: linear-gradient(#e0a396, #c9604c 48%, #a8200c 52%, #d2542c);
}

.menu-bar {
  display: flex;
  align-items: center;
  gap: 1px;
  height: 28px;
  background: linear-gradient(#fff, #eef1f8 35%, #d5dbed 45%, #e0e5f4);
  border-top: 1px solid #fff;
  border-bottom: 1px solid #a0a0a0;
}

.doc-icon {
  width: 18px;
  height: 18px;
  margin: 0 1px 0 7px;
}

.menu-item {
  padding: 2px 7px 0;
  line-height: 26px;
}

.mdi-buttons {
  display: flex;
  gap: 1px;
  margin-left: auto;
}

.mdi-buttons button {
  display: flex;
  align-items: center;
  justify-content: center;
  width: 23px;
  height: 26px;
  background: #dce8f6;
  border: 1px solid #a5b2c0;
}

.mdi-buttons svg {
  width: 12px;
  height: 12px;
  fill: #66717c;
  fill-rule: evenodd;
}

.mdi-buttons.floating {
  position: absolute;
  top: 7px;
  right: -10px;
  z-index: 1;
}

.toolbar {
  display: flex;
  align-items: center;
  height: 29px;
  padding-left: 20px;
  border-top: 1px solid #fff;
  border-bottom: 2px solid #696969;
}

.tool {
  display: flex;
  align-items: center;
  justify-content: center;
  width: 23px;
  height: 24px;
  flex: none;
}

.tool svg {
  width: 18px;
  height: 18px;
  shape-rendering: crispEdges;
}

.tool.pressed {
  background: #fafafa;
  box-shadow: inset 1px 1px #a0a0a0;
}

.abc {
  font-family: 'Liberation Sans', sans-serif;
  font-size: 10px;
}

.sep {
  width: 1px;
  height: 22px;
  margin: 0 4px 0 3px;
  background: #a0a0a0;
}

.grip {
  width: 0;
  height: 24px;
  margin: 0 4px;
  border-left: 2px dotted #b0b0b0;
}

.spacer {
  width: 24px;
}

.spacer.small {
  width: 12px;
}

.symbol-box {
  position: relative;
  width: 135px;
  height: 22px;
  margin: 0 2px;
  background: #fff;
}

.symbol-box input {
  box-sizing: border-box;
  width: 100%;
  height: 100%;
  padding: 0 20px 0 3px;
  border: 0;
  background: none;
  font: 12px 'Liberation Sans', sans-serif;
}

.symbol-box svg {
  position: absolute;
  top: 9px;
  right: 5px;
  width: 10px;
  height: 6px;
}

.chart {
  position: relative;
  background: #000;
  border-left: 1px solid #a0a0a0;
  border-right: 2px solid #e3e3e3;
  overflow: hidden;
}

.pane {
  margin: 0 -2px 0 -1px;
  font-family: 'Liberation Sans', Arial, sans-serif;
}

.legend {
  display: flex;
  gap: 10px;
  height: 19px;
  padding-left: 82px;
  font-size: 16px;
  line-height: 22px;
  white-space: nowrap;
}

.legend .wide { margin-right: 10px; }
.legend .wider { margin-right: 24px; }
.legend .widest { margin-right: 40px; }

.plot {
  display: block;
  width: 100%;
  overflow: visible;
}

.white { color: #fff; }
.violet { color: #6464ff; stroke: #6464ff; }
.green { color: #00ff00; fill: #00ff00; }
.cyan { color: #00ffff; stroke: #00ffff; }
.red { color: #ff0000; stroke: #ff0000; }
.blue { color: #0000ff; stroke: #0000ff; }
.navy { stroke: #0000c8; }
.olive { color: #b4b000; stroke: #b4b000; }
.purple { color: #800080; stroke: #800080; }
.yellow { stroke: #ffff00; }
.teal { stroke: #008080; }
.magenta { stroke: #ff00ff; }
.silver { color: #a0a0a4; stroke: #a0a0a4; }
.gray { color: #808080; stroke: #808080; }
.dim { color: #404040; }
.orange { color: #d06c00; stroke: #d06c00; }

.line,
.grid,
.axis,
.cycle,
.hatch {
  fill: none;
  stroke-width: 1px;
  shape-rendering: crispEdges;
}

.line.thick { stroke-width: 2px; }
.grid { stroke: #1a1a1a; }
.axis { stroke: #fff; }
.cycle { stroke: #008080; stroke-dasharray: 18 6; }
.hatch { stroke: #3a3a3a; stroke-dasharray: 3 3; }

.fill { stroke: none; }
.fill.cyan { fill: #00ffff; }
.fill.red { fill: #ff0000; }

.tick-label,
.tag-label {
  font-size: 20px;
  fill: #fff;
}

.tick-label.end { text-anchor: end; }
.tag-label { fill: #111; }

.signal-label {
  font-size: 16px;
  fill: #fff;
  text-anchor: middle;
}

.scroll-bar {
  display: flex;
  align-items: center;
  height: 22px;
  padding: 0 8px;
  border-bottom: 2px solid #000;
  background: #ededed;
}

.scroll-bar button svg {
  display: block;
  width: 6px;
  height: 10px;
  fill: #444;
}

.thumb {
  width: 7px;
  height: 16px;
  margin: 0 9px 0 auto;
  padding: 0 5px;
  border: 1px solid #979797;
  border-radius: 2px;
  background: repeating-linear-gradient(90deg, #777 0 1px, #ddd 1px 3px) content-box, #ddd;
}

.tabs {
  display: flex;
  height: 17px;
  border-bottom: 1px solid #909090;
}

.pager {
  width: 17px;
  height: 16px;
  border: 1px solid #a8a8a8;
  border-top-color: #fff;
  border-left-color: #fff;
  box-sizing: border-box;
}

.pager svg {
  display: block;
  width: 8px;
  height: 10px;
  margin: 0 auto;
  fill: #666;
}

.tab-list {
  display: flex;
  padding-left: 2px;
}

.tab {
  position: relative;
  height: 17px;
  margin: 0;
  padding: 0 14px 0 12px;
  font-size: 12px;
  line-height: 15px;
  white-space: nowrap;
  box-sizing: border-box;
}

.tab::before,
.tab::after {
  content: '';
  position: absolute;
  inset: 0 -3px 0 0;
  border-left: 1px solid #000;
  border-bottom: 1px solid #000;
  transform: skewX(15deg);
}

.tab::after {
  inset: 0 0 0 50%;
  border-left: 0;
  border-right: 1px solid #000;
  transform: skewX(-15deg);
}

.tab.active {
  padding: 0 11px 0 10px;
  font-weight: 700;
  background: #fff;
}

.tab.active::before,
.tab.active::after {
  border-bottom-color: #fff;
}

.status-bar {
  display: flex;
  height: 20px;
  line-height: 22px;
  background: #f0edec;
  border-bottom: 1px solid #3a4660;
  white-space: nowrap;
  overflow: hidden;
}

.help {
  flex: 1;
  padding-left: 2px;
}

.cell {
  padding: 0 14px 0 5px;
  border-right: 1px solid #d4d0ce;
}

.cell.on {
  padding: 0 4px 0 5px;
  color: #008000;
}

.cell.bulb {
  padding: 0 4px;
}

.bulb svg {
  width: 12px;
  height: 14px;
}

.cell.date {
  padding: 0 3px 0 6px;
  border: 0;
}
</style>
